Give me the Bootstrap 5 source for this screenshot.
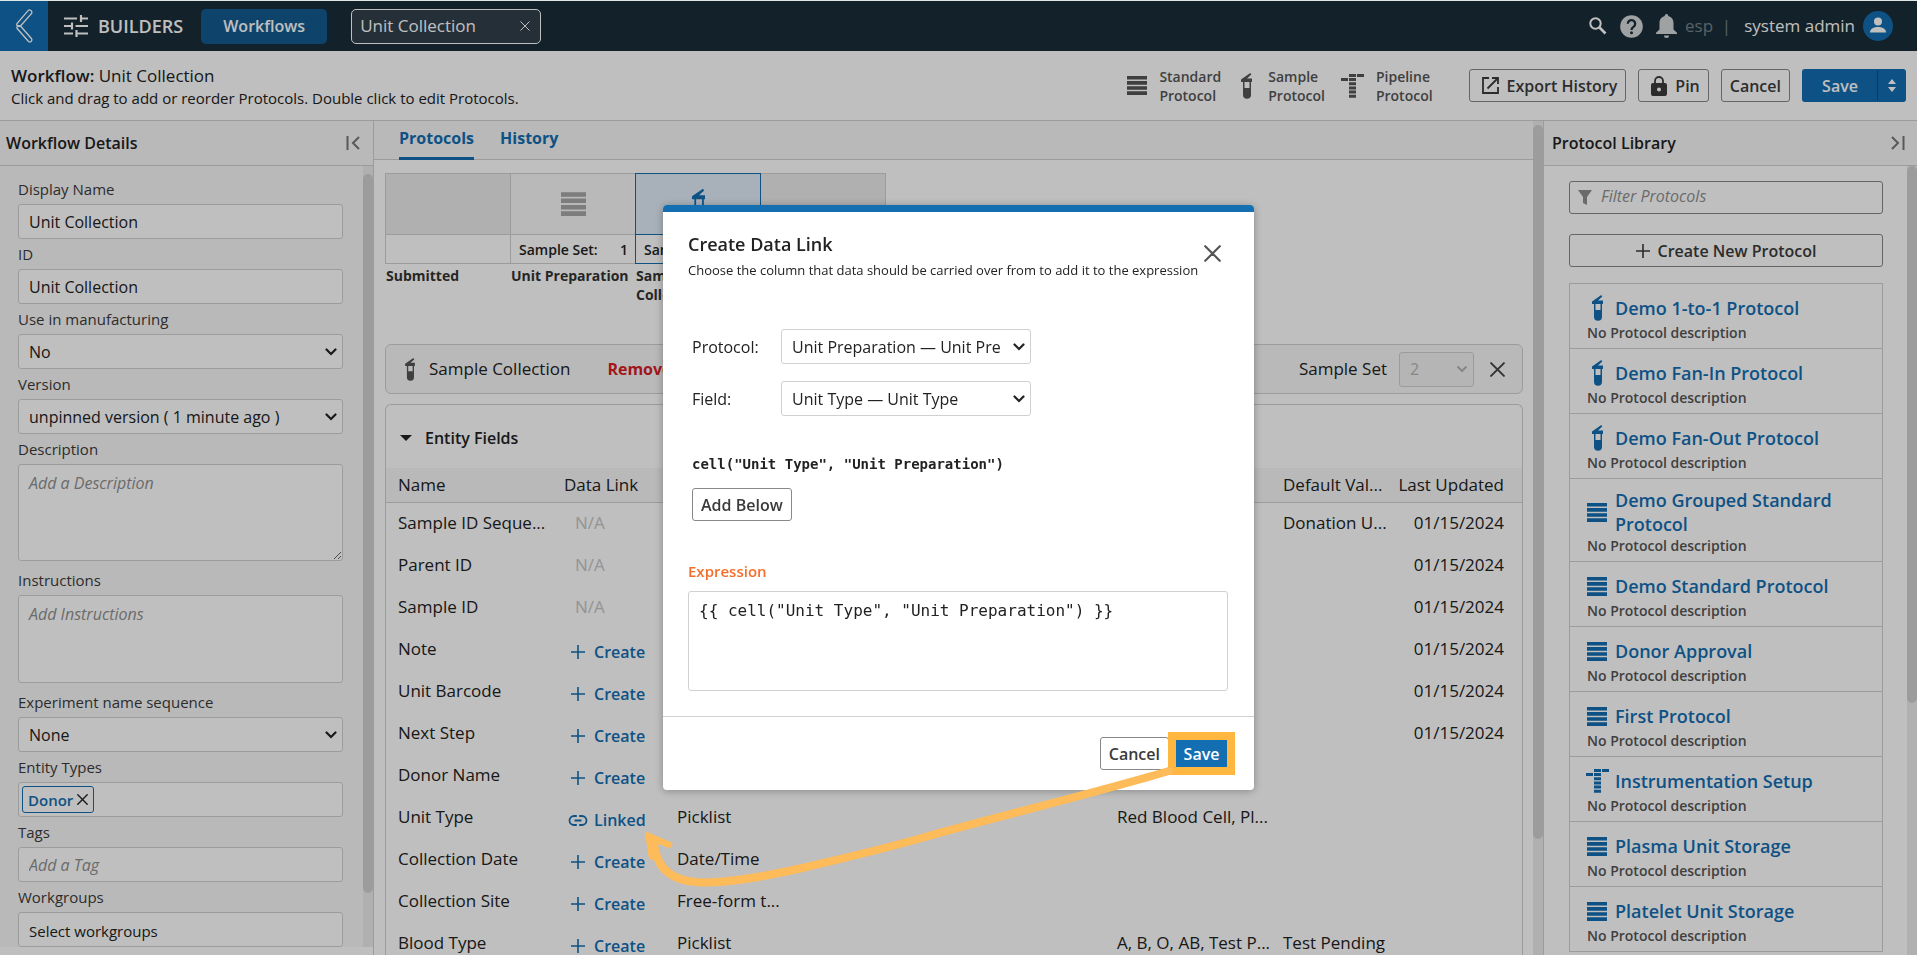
<!DOCTYPE html>
<html lang="en">
<head>
<meta charset="utf-8">
<meta name="viewport" content="width=device-width, initial-scale=1">
<title>Workflow: Unit Collection</title>
<link href="https://cdn.jsdelivr.net/npm/bootstrap@5.3.0/dist/css/bootstrap.min.css" rel="stylesheet">
<style>
  :root { --blue: #136eb2; --line: #d1d1d1; --soft: #f7f7f7; --ink: #222; --mid: #555; }
  body { font-family: "Open Sans", sans-serif; font-size: 16px; line-height: 24px; color: var(--ink); background: #fff; border-top: 1px solid #dfe8e6; }
  svg { display: block; flex: none; }
  .fw-semi { font-weight: 600; }
  .t13 { font-size: 13px; } .t14 { font-size: 14px; line-height: 19px; } .t15 { font-size: 15px; } .t17 { font-size: 17px; } .t18 { font-size: 18px; }

  .topbar { height: 50px; background: #1a2d38; color: #fff; }
  .back-link { width: 48px; background: var(--blue); }
  .brand { margin: 0 18px 0 10px; }
  .btn-flows { width: 126px; height: 35px; background: #135b91; color: #fff; font-size: 16px; font-weight: 600; padding: 0; border: 0; border-radius: 5px; }
  .open-tab { width: 190px; height: 35px; background: #313f4b; border: 1px solid #fff; border-radius: 5px; padding: 0 10px 0 8px; }
  .tools { gap: 13px; }
  .plain { background: none; border: 0; padding: 0; color: inherit; line-height: 24px; }
  .dim { color: #77828a; }

  .subbar { height: 70px; border-bottom: 1px solid var(--line); padding: 0 11px; }
  .legend-item { color: var(--mid); }
  .btn-line, .btn-fill { height: 33px; font-size: 16px; font-weight: 600; line-height: 24px; padding: 0 8px; border-radius: 3px; color: #3b3b3b; border: 1px solid #888; background: #fff; }
  .btn-fill { background: var(--blue); border-color: var(--blue); color: #fff; min-width: 57px; }
  .save-main { width: 76px; border-radius: 3px 0 0 3px; border-right-color: #0d4f80; }
  .save-more { width: 28px; min-width: 0; border-radius: 0 3px 3px 0; border-left: 0; }

  .side { width: 374px; }
  .side-head { height: 45px; border-bottom: 1px solid var(--line); background: var(--soft); padding-left: 6px; }
  .side-head.lib-head { padding-left: 8px; }
  .rail { width: 10px; background: #ebebeb; }
  .thumb { background: #d1d1d1; border-radius: 5px; }
  .form-side { padding: 8px 20px 0 18px; }
  .form-side label { display: block; height: 30px; line-height: 30px; font-size: 15px; color: #3b3b3b; }
  .field { display: block; width: 100%; height: 35px; border: 1px solid var(--line); border-radius: 3px; background-color: #fff; color: var(--ink); font-size: 16px; line-height: 24px; padding: 0 10px; }
  select.field { appearance: none; padding-right: 30px; background-repeat: no-repeat; background-position: right 5px center; background-size: 12px 8px;
    background-image: url("data:image/svg+xml,%3Csvg xmlns='http://www.w3.org/2000/svg' viewBox='0 0 12 8'%3E%3Cpath d='M1.5 1.5 6 6l4.500-4.500' fill='none' stroke='%23222' stroke-width='2.200' stroke-linecap='round'/%3E%3C/svg%3E"); }
  select.field:disabled { color: #b5b5b5; background-color: #f2f2f2; opacity: 1;
    background-image: url("data:image/svg+xml,%3Csvg xmlns='http://www.w3.org/2000/svg' viewBox='0 0 12 8'%3E%3Cpath d='M1.500 1.500 6 6l4.500-4.500' fill='none' stroke='%23b5b5b5' stroke-width='2'/%3E%3C/svg%3E"); }
  textarea.field { height: auto; padding: 6px 10px; margin-bottom: 4px; }
  .field.t15 { font-size: 15px; padding-top: 2px; }
  .field::placeholder, .filter-input::placeholder { font-style: italic; color: #8f8f8f; opacity: 1; }
  .chip { height: 27px; border: 1px solid var(--blue); border-radius: 3px; color: var(--blue); padding: 0 5px; }
  .field.chips { padding: 0 3px; }

  .tabs { height: 39px; background: var(--soft); border-bottom: 1px solid var(--line); padding-left: 25px; gap: 26px; }
  .tabs a { color: var(--blue); font-weight: 700; text-decoration: none; height: 39px; padding-top: 5px; border-bottom: 3px solid transparent; }
  .tabs a.active { border-color: var(--blue); }
  .work { padding: 13px 10px 0 11px; }
  .step { width: 126px; margin-right: -1px; }
  .step-box { border: 1px solid var(--line); }
  .step-top { height: 61px; background: #ebebeb; border-bottom: 1px solid var(--line); }
  .step-low { height: 28px; padding: 0 7px 0 8px; background: #fff; }
  .step-name { padding: 2px 1px 0; font-weight: 700; color: #333; }
  .step.live .step-top { background: var(--soft); color: #a7a7a7; }
  .step.picked { z-index: 1; }
  .step.picked .step-box, .step.picked .step-top { border-color: var(--blue); }
  .step.picked .step-top { background: #e1edf9; color: var(--blue); }
  .panel { border: 1px solid var(--line); border-radius: 6px; }
  .picked-bar { height: 50px; margin-top: 40px; background: var(--soft); padding: 0 17px 0 19px; }
  .picked-title { margin: 0 29px 0 14px; }
  .remove { color: #d91e27; font-weight: 700; }
  .fields-panel { margin-top: 10px; border-bottom: 0; border-radius: 6px 6px 0 0; }
  .fields-head { height: 63px; padding: 2px 0 0 14px; gap: 13px; }

  .grid-table { table-layout: fixed; width: 100%; font-size: 17px; white-space: nowrap; }
  .grid-table th { height: 34px; background: var(--soft); border-bottom: 1px solid var(--line); font-weight: 400; padding: 0 0 0 12px; }
  .grid-table td { height: 42px; padding: 0 0 0 12px; }
  .grid-table .when { text-align: right; padding-right: 18px; padding-left: 0; }
  .grid-table .na { color: #c6c6c6; padding-left: 23px; }
  .grid-table td.act { padding: 6px 0 0 16px; }
  .act button { color: var(--blue); font-size: 16px; font-weight: 600; gap: 6px; }
  .act svg { width: 20px; }

  .lib-body { padding: 15px 24px 0 25px; }
  .filter-box { height: 33px; border: 1px solid #888; border-radius: 3px; padding-left: 8px; gap: 9px; }
  .filter-input { border: 0; outline: 0; background: none; padding: 0 0 3px; min-width: 0; }
  .new-btn { margin-top: 20px; }
  .lib { border: 1px solid var(--line); border-bottom: 0; margin: 16px 0 0; }
  .lib li { padding: 9px 17px 6px; border-bottom: 1px solid var(--line); }
  .lib a { min-height: 30px; color: var(--blue); font-size: 18px; font-weight: 600; text-decoration: none; gap: 8px; }
  .lib .ico { width: 20px; display: flex; justify-content: center; }
  .lib p { margin: 0; font-weight: 600; color: var(--mid); }

  .shade { position: fixed; inset: 1px 0 0; background: #000; opacity: .25; z-index: 1050; }
  .link-dialog { max-width: 591px; margin: 205px auto 0; }
  .link-box { border: 0; border-radius: 4px; box-shadow: 0 1px 8px rgba(0,0,0,.3); }
  .link-top { height: 7px; background: var(--blue); border-radius: 4px 4px 0 0; }
  .link-main { padding: 20px 26px 25px 25px; }
  .link-foot { border-top: 1px solid var(--line); padding: 20px 24px; height: 74px; }
  .dlg-head { height: 97px; }
  .dlg-close { margin: 13px 7px 0 0; }
  .pick-row { height: 35px; padding-left: 4px; }
  .pick-row + .pick-row { margin-top: 17px; }
  .pick-row label { width: 89px; }
  .pick-row select { width: 250px; }
  .mono { font-family: "DejaVu Sans Mono", monospace; }
  .snippet { padding-left: 4px; color: var(--ink); }
  .snippet-code { padding-top: 39px; height: 72px; }
  .expr-label { color: #f36f2b; font-weight: 600; font-size: 15px; margin-top: 38px; height: 32px; }
  textarea.expr-box { height: 100px; margin: 0; resize: none; padding-top: 7px; }
  .ring::after { content: ""; position: absolute; inset: -5px; border: 8px solid #ffb740; pointer-events: none; }
  .pointer { position: absolute; left: -30px; top: 550px; pointer-events: none; }
</style>
</head>
<body class="vh-100 overflow-hidden d-flex flex-column">

<svg width="0" height="0" class="position-absolute" aria-hidden="true">
  <symbol id="i-std" viewBox="0 0 20 19"><path fill="currentColor" d="M0 0h20v3.600H0zM0 5.100h20v3.600H0zM0 10.200h20v3.600H0zM0 15.300h20V19H0z"/></symbol>
  <symbol id="i-tube" viewBox="0 0 11 26"><path fill="currentColor" fill-rule="evenodd" d="M0 6.500 9.300 0l1 1.600L6 5.500h5V9h-1v12.800a4 4 0 0 1-8 0V9H0zM3.500 9v6h5V9z"/></symbol>
  <symbol id="i-pipe" viewBox="0 0 23 24"><path fill="currentColor" d="M8 0h7v3H8zM16 0h7v3h-7zM0 4h7v3H0zM8 4h7v3H8zM8 8.200h7v3H8zM8 12.400h7v3H8zM8 16.600h7v3H8zM8 20.800h7v3H8z"/></symbol>
  <symbol id="i-x" viewBox="0 0 14 14"><path fill="none" stroke="currentColor" stroke-linecap="round" d="m1 1 12 12M13 1 1 13"/></symbol>
  <symbol id="i-plus" viewBox="0 0 14 14"><path fill="none" stroke="currentColor" stroke-width="1.600" d="M7 0v14M0 7h14"/></symbol>
  <symbol id="i-link" viewBox="0 0 19 11"><path fill="none" stroke="currentColor" stroke-width="1.800" d="M8.300 1H5.500a4.500 4.500 0 0 0 0 9h2.800M10.700 1h2.800a4.500 4.500 0 0 1 0 9h-2.800M6 5.500h7"/></symbol>
</svg>

<header class="topbar d-flex align-items-center flex-shrink-0">
  <a href="#" class="back-link h-100 d-flex align-items-center justify-content-center" aria-label="Back">
    <svg width="17" height="34" viewBox="0 0 17 34" fill="none" stroke="#fff" stroke-width="1.300"><path d="M12.500 1.200 1 14.600Q0.400 15.600 1 16.500L4.500 17 15.600 4.400Q16.300 2.500 15 1.500 13.500.500 12.500 1.200ZM4.500 17 1.200 17.500Q.600 18.500 1.200 19.500L12.500 32.500Q14 33.500 15.300 32.200 16.300 31 15.600 29.700Z"/></svg>
  </a>
  <svg class="ms-3" width="24" height="24" viewBox="0 0 24 24" fill="none" stroke="#fff" stroke-width="2.200"><path d="M0 4.500h13M17 1v7M17 4.500H24M0 12h8M8 8.500v7M11.500 12H24M0 19.500h9M12.500 16v7M12.500 19.500H24"/></svg>
  <span class="fw-semi t18 brand">BUILDERS</span>
  <button class="btn btn-flows">Workflows</button>
  <div class="open-tab d-flex align-items-center justify-content-between ms-4">
    <span class="t17">Unit Collection</span>
    <button class="plain" aria-label="Close tab"><svg width="10" height="10"><use href="#i-x" stroke-width="1.400"/></svg></button>
  </div>
  <div class="d-flex align-items-center ms-auto pe-4 tools">
    <svg width="18" height="18" viewBox="0 0 18 18" fill="none" stroke="#fff"><circle cx="6.500" cy="6.500" r="5.200" stroke-width="2"/><path d="m10.500 10.500 6 6" stroke-width="2.600"/></svg>
    <svg width="23" height="23" viewBox="0 0 23 23"><circle cx="11.500" cy="11.500" r="11.300" fill="#d5d9d9"/><path d="M7.800 8.800a3.700 3.700 0 1 1 5.700 3.100c-1.300.900-2 1.500-2 3" fill="none" stroke="#1a2d38" stroke-width="2.300"/><circle cx="11.500" cy="17.800" r="1.500" fill="#1a2d38"/></svg>
    <div class="d-flex align-items-center gap-2">
      <svg width="21" height="24" viewBox="0 0 21 24" fill="#d5d9d9"><path d="M10.500 0a1.700 1.700 0 0 1 1.700 1.900c3.400.800 5.300 3.700 5.300 7.100v6.500l3.500 3.300v1.200H0v-1.200l3.500-3.300V9c0-3.400 1.900-6.300 5.300-7.100A1.700 1.700 0 0 1 10.500 0ZM8 21.500h5a2.500 2.500 0 0 1-5 0Z"/></svg>
      <span class="t17 dim">esp &nbsp;|</span>
    </div>
    <div class="d-flex align-items-center gap-2">
      <span class="t17">system admin</span>
      <svg width="30" height="30" viewBox="0 0 30 30"><circle cx="15" cy="15" r="15" fill="#136eb2"/><circle cx="15" cy="10.500" r="4" fill="#fff"/><path d="M7 21.500c0-4 4-5.500 8-5.500s8 1.500 8 5.500Z" fill="#fff"/></svg>
    </div>
  </div>
</header>

<section class="subbar d-flex align-items-center flex-shrink-0">
  <div>
    <div class="t17"><span class="fw-semi">Workflow:</span> Unit Collection</div>
    <div class="t15" style="line-height:20px">Click and drag to add or reorder Protocols. Double click to edit Protocols.</div>
  </div>
  <div class="d-flex align-items-center ms-auto">
    <div class="legend-item d-flex align-items-center me-1"><svg width="20" height="19"><use href="#i-std"/></svg><div class="t14 fw-semi ms-2 ps-1">Standard<br>Protocol</div></div>
    <div class="legend-item d-flex align-items-center ms-3"><svg width="11" height="26"><use href="#i-tube"/></svg><div class="t14 fw-semi ms-3">Sample<br>Protocol</div></div>
    <div class="legend-item d-flex align-items-center ms-3"><svg width="23" height="24"><use href="#i-pipe"/></svg><div class="t14 fw-semi ms-2 ps-1">Pipeline<br>Protocol</div></div>
  </div>
  <div class="d-flex align-items-center gap-2 ps-4 ms-2">
    <button class="btn-line d-flex align-items-center gap-2 me-1 ms-1"><svg class="ms-1" width="17" height="17" viewBox="0 0 17 17" fill="none" stroke="currentColor" stroke-width="1.800"><path d="M7 1H1v15h15v-6M10 1h6v6M16 1 5.500 11.500"/></svg>Export History</button>
    <button class="btn-line d-flex align-items-center gap-2 me-1"><svg class="ms-1" width="16" height="20" viewBox="0 0 16 20"><path fill="currentColor" fill-rule="evenodd" d="M2 7h12q2 0 2 2v9q0 2-2 2H2q-2 0-2-2V9q0-2 2-2Zm6 4.500a2 2 0 1 0 0 4 2 2 0 0 0 0-4Z"/><path d="M4 7V5a4 4 0 0 1 8 0v2" fill="none" stroke="currentColor" stroke-width="1.800"/></svg>Pin</button>
    <button class="btn-line me-1">Cancel</button>
    <div class="d-flex">
      <button class="btn-fill save-main">Save</button>
      <button class="btn-fill save-more d-flex align-items-center justify-content-center" aria-label="More save options"><svg width="8" height="13" viewBox="0 0 8 13" fill="#fff"><path d="M4 0l4 5H0zM4 13 0 8h8z"/></svg></button>
    </div>
  </div>
</section>

<div class="d-flex flex-fill overflow-hidden">
  <aside class="side d-flex flex-column flex-shrink-0 border-end" style="--bs-border-color:#d1d1d1">
    <div class="side-head d-flex align-items-center justify-content-between flex-shrink-0">
      <h2 class="m-0 fs-6 fw-semi" style="line-height:24px">Workflow Details</h2>
      <button class="plain me-2 pe-1" aria-label="Collapse details"><svg width="15" height="14" viewBox="0 0 15 14" fill="none" stroke="#777" stroke-width="2"><path d="M1.500 0v14M13 1 7 7l6 6"/></svg></button>
    </div>
    <div class="d-flex flex-fill overflow-hidden mb-2" style="background:#f7f7f7">
      <form class="form-side flex-fill">
        <label for="dn">Display Name</label><input id="dn" class="field" value="Unit Collection">
        <label for="wid">ID</label><input id="wid" class="field" value="Unit Collection">
        <label for="mf">Use in manufacturing</label><select id="mf" class="field"><option>No</option></select>
        <label for="ver">Version</label><select id="ver" class="field"><option>unpinned version ( 1 minute ago )</option></select>
        <label for="desc">Description</label><textarea id="desc" class="field" style="height:97px" placeholder="Add a Description"></textarea>
        <label for="ins">Instructions</label><textarea id="ins" class="field" style="height:88px;resize:none" placeholder="Add Instructions"></textarea>
        <label for="seq">Experiment name sequence</label><select id="seq" class="field"><option>None</option></select>
        <label for="et">Entity Types</label>
        <div class="field chips d-flex align-items-center">
          <span class="chip t15 fw-semi d-flex align-items-center gap-1">Donor <button type="button" class="plain text-dark" aria-label="Remove Donor"><svg width="11" height="11"><use href="#i-x" stroke-width="1.800"/></svg></button></span>
          <input id="et" class="filter-input flex-fill">
        </div>
        <label for="tg">Tags</label><input id="tg" class="field" placeholder="Add a Tag">
        <label for="wg">Workgroups</label><input id="wg" class="field t15" value="Select workgroups">
      </form>
      <div class="rail flex-shrink-0 pt-2"><div class="thumb" style="height:93%"></div></div>
    </div>
  </aside>

  <main class="flex-fill d-flex overflow-hidden">
    <div class="flex-fill overflow-hidden">
      <nav class="tabs d-flex"><a href="#" class="active">Protocols</a><a href="#">History</a></nav>
      <div class="work">
        <div class="d-flex t14">
          <div class="step"><div class="step-box"><div class="step-top"></div><div class="step-low"></div></div><div class="step-name">Submitted</div></div>
          <div class="step live"><div class="step-box"><div class="step-top d-flex align-items-center justify-content-center"><svg width="25" height="24"><use href="#i-std"/></svg></div><div class="step-low d-flex align-items-center justify-content-between fw-semi"><span>Sample Set:</span><span>1</span></div></div><div class="step-name text-nowrap">Unit Preparation</div></div>
          <div class="step picked position-relative"><div class="step-box"><div class="step-top d-flex align-items-center justify-content-center"><svg width="13" height="32"><use href="#i-tube"/></svg></div><div class="step-low d-flex align-items-center fw-semi">Sample Set:</div></div><div class="step-name">Sample<br>Collection</div></div>
          <div class="step"><div class="step-box"><div class="step-top"></div><div class="step-low"></div></div></div>
        </div>

        <div class="panel picked-bar d-flex align-items-center">
          <svg width="10" height="23" style="color:#555"><use href="#i-tube"/></svg>
          <span class="t17 picked-title">Sample Collection</span>
          <button class="plain remove ms-2">Remove</button>
          <label for="ss" class="t17 ms-auto me-2 pe-1">Sample Set</label>
          <select id="ss" class="field" style="width:75px" disabled><option>2</option></select>
          <button class="plain ms-3" style="color:#444" aria-label="Close"><svg width="15" height="15"><use href="#i-x" stroke-width="1.800"/></svg></button>
        </div>

        <div class="panel fields-panel">
          <button class="plain d-flex align-items-center fw-semi fields-head"><svg width="12" height="6" viewBox="0 0 12 6"><path d="M0 0h12L6 6z" fill="#222"/></svg><span>Entity Fields</span></button>
          <table class="grid-table">
            <colgroup><col style="width:166px"><col style="width:113px"><col><col style="width:166px"><col style="width:113px"><col style="width:138px"></colgroup>
            <thead><tr><th>Name</th><th>Data Link</th><th></th><th></th><th>Default Val...</th><th class="when">Last Updated</th></tr></thead>
            <tbody>
              <tr><td>Sample ID Seque...</td><td class="na">N/A</td><td></td><td></td><td>Donation U...</td><td class="when">01/15/2024</td></tr>
              <tr><td>Parent ID</td><td class="na">N/A</td><td></td><td></td><td></td><td class="when">01/15/2024</td></tr>
              <tr><td>Sample ID</td><td class="na">N/A</td><td></td><td></td><td></td><td class="when">01/15/2024</td></tr>
              <tr><td>Note</td><td class="act"><button class="plain d-flex align-items-center"><svg height="14"><use href="#i-plus"/></svg>Create</button></td><td></td><td></td><td></td><td class="when">01/15/2024</td></tr>
              <tr><td>Unit Barcode</td><td class="act"><button class="plain d-flex align-items-center"><svg height="14"><use href="#i-plus"/></svg>Create</button></td><td></td><td></td><td></td><td class="when">01/15/2024</td></tr>
              <tr><td>Next Step</td><td class="act"><button class="plain d-flex align-items-center"><svg height="14"><use href="#i-plus"/></svg>Create</button></td><td></td><td></td><td></td><td class="when">01/15/2024</td></tr>
              <tr><td>Donor Name</td><td class="act"><button class="plain d-flex align-items-center"><svg height="14"><use href="#i-plus"/></svg>Create</button></td><td></td><td></td><td></td><td></td></tr>
              <tr><td>Unit Type</td><td class="act"><button class="plain d-flex align-items-center"><svg height="11"><use href="#i-link"/></svg>Linked</button></td><td>Picklist</td><td>Red Blood Cell, Pl...</td><td></td><td></td></tr>
              <tr><td>Collection Date</td><td class="act"><button class="plain d-flex align-items-center"><svg height="14"><use href="#i-plus"/></svg>Create</button></td><td>Date/Time</td><td></td><td></td><td></td></tr>
              <tr><td>Collection Site</td><td class="act"><button class="plain d-flex align-items-center"><svg height="14"><use href="#i-plus"/></svg>Create</button></td><td>Free-form t...</td><td></td><td></td><td></td></tr>
              <tr><td>Blood Type</td><td class="act"><button class="plain d-flex align-items-center"><svg height="14"><use href="#i-plus"/></svg>Create</button></td><td>Picklist</td><td>A, B, O, AB, Test P...</td><td>Test Pending</td><td></td></tr>
            </tbody>
          </table>
        </div>
      </div>
    </div>
    <div class="rail flex-shrink-0 pt-1"><div class="thumb" style="height:86%"></div></div>
  </main>

  <aside class="side d-flex flex-column flex-shrink-0 border-start" style="--bs-border-color:#d1d1d1">
    <div class="side-head lib-head d-flex align-items-center justify-content-between flex-shrink-0">
      <h2 class="m-0 fs-6 fw-semi" style="line-height:24px">Protocol Library</h2>
      <button class="plain me-2 pe-1" aria-label="Collapse library"><svg width="15" height="14" viewBox="0 0 15 14" fill="none" stroke="#777" stroke-width="2"><path d="M13.500 0v14M2 1l6 6-6 6"/></svg></button>
    </div>
    <div class="d-flex flex-fill overflow-hidden">
      <div class="flex-fill lib-body">
        <div class="filter-box d-flex align-items-center">
          <svg width="14" height="15" viewBox="0 0 14 15" fill="#8f8f8f"><path d="M0 0h14L9 7v8l-4-2V7z"/></svg>
          <input class="filter-input flex-fill" placeholder="Filter Protocols" aria-label="Filter Protocols">
        </div>
        <button class="btn-line w-100 d-flex align-items-center justify-content-center gap-2 new-btn"><svg width="14" height="14"><use href="#i-plus"/></svg>Create New Protocol</button>
        <ul class="lib list-unstyled">
          <li><a href="#" class="d-flex align-items-center"><span class="ico"><svg width="11" height="26"><use href="#i-tube"/></svg></span>Demo 1-to-1 Protocol</a><p class="t14">No Protocol description</p></li>
          <li><a href="#" class="d-flex align-items-center"><span class="ico"><svg width="11" height="26"><use href="#i-tube"/></svg></span>Demo Fan-In Protocol</a><p class="t14">No Protocol description</p></li>
          <li><a href="#" class="d-flex align-items-center"><span class="ico"><svg width="11" height="26"><use href="#i-tube"/></svg></span>Demo Fan-Out Protocol</a><p class="t14">No Protocol description</p></li>
          <li><a href="#" class="d-flex align-items-center"><span class="ico"><svg width="20" height="19"><use href="#i-std"/></svg></span>Demo Grouped Standard Protocol</a><p class="t14">No Protocol description</p></li>
          <li><a href="#" class="d-flex align-items-center"><span class="ico"><svg width="20" height="19"><use href="#i-std"/></svg></span>Demo Standard Protocol</a><p class="t14">No Protocol description</p></li>
          <li><a href="#" class="d-flex align-items-center"><span class="ico"><svg width="20" height="19"><use href="#i-std"/></svg></span>Donor Approval</a><p class="t14">No Protocol description</p></li>
          <li><a href="#" class="d-flex align-items-center"><span class="ico"><svg width="20" height="19"><use href="#i-std"/></svg></span>First Protocol</a><p class="t14">No Protocol description</p></li>
          <li><a href="#" class="d-flex align-items-center"><span class="ico"><svg width="23" height="24"><use href="#i-pipe"/></svg></span>Instrumentation Setup</a><p class="t14">No Protocol description</p></li>
          <li><a href="#" class="d-flex align-items-center"><span class="ico"><svg width="20" height="19"><use href="#i-std"/></svg></span>Plasma Unit Storage</a><p class="t14">No Protocol description</p></li>
          <li><a href="#" class="d-flex align-items-center"><span class="ico"><svg width="20" height="19"><use href="#i-std"/></svg></span>Platelet Unit Storage</a><p class="t14">No Protocol description</p></li>
        </ul>
      </div>
      <div class="rail flex-shrink-0"><div class="thumb" style="height:68%"></div></div>
    </div>
  </aside>
</div>

<div class="shade"></div>
<div class="modal d-block" role="dialog" aria-labelledby="dlg-title">
  <div class="modal-dialog link-dialog">
    <div class="modal-content link-box">
      <div class="link-top"></div>
      <div class="link-main">
        <div class="d-flex justify-content-between align-items-start dlg-head">
          <div>
            <h1 id="dlg-title" class="t18 fw-semi m-0" style="line-height:24px">Create Data Link</h1>
            <p class="t13 m-0 text-nowrap" style="line-height:28px">Choose the column that data should be carried over from to add it to the expression</p>
          </div>
          <button class="plain dlg-close" style="color:#555" aria-label="Close dialog"><svg width="17" height="17"><use href="#i-x" stroke-width="1.800"/></svg></button>
        </div>
        <div class="pick-row d-flex align-items-center"><label for="pr">Protocol:</label><select id="pr" class="field"><option>Unit Preparation — Unit Preparation</option></select></div>
        <div class="pick-row d-flex align-items-center"><label for="fd">Field:</label><select id="fd" class="field"><option>Unit Type — Unit Type</option></select></div>
        <div class="snippet">
          <code class="mono t14 fw-bold d-block text-reset snippet-code">cell("Unit Type", "Unit Preparation")</code>
          <button class="btn-line">Add Below</button>
        </div>
        <label for="ex" class="expr-label d-block">Expression</label>
        <textarea id="ex" class="field mono expr-box">{{ cell("Unit Type", "Unit Preparation") }}</textarea>
      </div>
      <div class="link-foot d-flex justify-content-end">
        <button class="btn-line">Cancel</button>
        <span class="ring position-relative ms-1"><button class="btn-fill">Save</button></span>
      </div>
      <svg class="pointer" width="560" height="140" viewBox="0 0 560 140"><g stroke="#febb59" stroke-linecap="round" stroke-linejoin="round"><path fill="none" stroke-width="8" d="M536 16C455 40 375 59 292 82C240 97 210 103 169 113C130 122 100 127 73 127.500C40 128 24 114 21 90"/><path fill="#febb59" stroke-width="3" d="M13.500 78.500 38 89 36.500 91.500 24.500 87 20 103 17.500 103Z"/></g></svg>
    </div>
  </div>
</div>
<script src="https://cdn.jsdelivr.net/npm/bootstrap@5.3.0/dist/js/bootstrap.bundle.min.js"></script>
</body>
</html>
